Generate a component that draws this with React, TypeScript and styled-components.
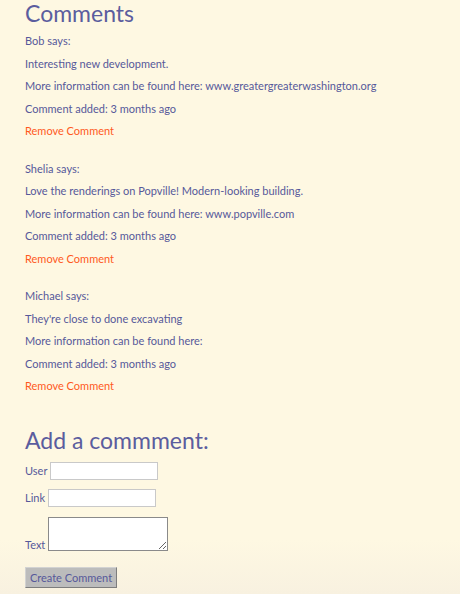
import React from "react";
import styled, { createGlobalStyle } from "styled-components";

const Global = createGlobalStyle`
  html, body { margin: 0; padding: 0; }
  body {
    background: #fef8e2;
    min-height: 594px;
    font-family: Lato, "Open Sans", sans-serif;
    color: #56589a;
  }
`;

const Page = styled.div`
  padding: 0 25px 6px 25px;
  min-height: 594px;
  box-sizing: border-box;
  background: linear-gradient(to bottom, #fef8e2 0, #fef8e2 540px, #f8f1e0 594px);
`;

const Heading = styled.h2<{ $top?: number }>`
  margin: ${(p) => p.$top ?? 0}px 0 0 0;
  font-size: 23px;
  font-weight: 400;
  line-height: 26px;
  color: #5b5d9e;
`;

const CommentList = styled.div`
  display: flex;
  flex-direction: column;
  gap: 15px;
  margin-top: 4px;
`;

const CommentBlock = styled.div`
  display: flex;
  flex-direction: column;
`;

const Line = styled.p<{ $danger?: boolean }>`
  margin: 0;
  font-size: 11px;
  line-height: 22.5px;
  color: ${(p) => (p.$danger ? "#ff5a1e" : "#56589a")};
  cursor: ${(p) => (p.$danger ? "pointer" : "default")};
`;

const Form = styled.form`
  display: flex;
  flex-direction: column;
  margin-top: 9px;
`;

const Row = styled.div<{ $end?: boolean; $gap?: number }>`
  display: flex;
  align-items: ${(p) => (p.$end ? "flex-end" : "center")};
  gap: 3px;
  margin-top: ${(p) => p.$gap ?? 0}px;
`;

const Label = styled.label`
  font-size: 11px;
  line-height: 13px;
  color: #56589a;
`;

const TextInput = styled.input`
  box-sizing: border-box;
  width: 108px;
  height: 18px;
  border: 1px solid #c9c9c9;
  background: #fff;
  padding: 1px 2px;
  margin: 0;
  font-size: 11px;
`;

const TextArea = styled.textarea`
  box-sizing: border-box;
  width: 120px;
  height: 34px;
  border: 1px solid #8a8a8a;
  background: #fff;
  margin: 0;
  padding: 2px;
  font-size: 11px;
`;

const Button = styled.button`
  align-self: flex-start;
  margin-top: 16px;
  box-sizing: border-box;
  width: 92px;
  height: 21px;
  padding: 0;
  background: #bcbcbc;
  border: 1px solid;
  border-color: #d2d2d2 #7d7d7d #7d7d7d #d2d2d2;
  font-family: Lato, "Open Sans", sans-serif;
  font-size: 11px;
  color: #56589a;
`;

type Comment = { user: string; text: string; link: string };

const comments: Comment[] = [
  { user: "Bob", text: "Interesting new development.", link: "www.greatergreaterwashington.org" },
  { user: "Shelia", text: "Love the renderings on Popville! Modern-looking building.", link: "www.popville.com" },
  { user: "Michael", text: "They're close to done excavating", link: "" },
];

export default function App() {
  return (
    <>
      <Global />
      <Page>
        <Heading>Comments</Heading>
        <CommentList>
          {comments.map((c) => (
            <CommentBlock key={c.user}>
              <Line>{c.user} says:</Line>
              <Line>{c.text}</Line>
              <Line>More information can be found here: {c.link}</Line>
              <Line>Comment added: 3 months ago</Line>
              <Line $danger>Remove Comment</Line>
            </CommentBlock>
          ))}
        </CommentList>
        <Heading $top={29}>Add a commment:</Heading>
        <Form onSubmit={(e) => e.preventDefault()}>
          <Row>
            <Label htmlFor="user">User</Label>
            <TextInput id="user" type="text" />
          </Row>
          <Row $gap={9}>
            <Label htmlFor="link">Link</Label>
            <TextInput id="link" type="text" />
          </Row>
          <Row $end $gap={10}>
            <Label htmlFor="text">Text</Label>
            <TextArea id="text" />
          </Row>
          <Button type="submit">Create Comment</Button>
        </Form>
      </Page>
    </>
  );
}
